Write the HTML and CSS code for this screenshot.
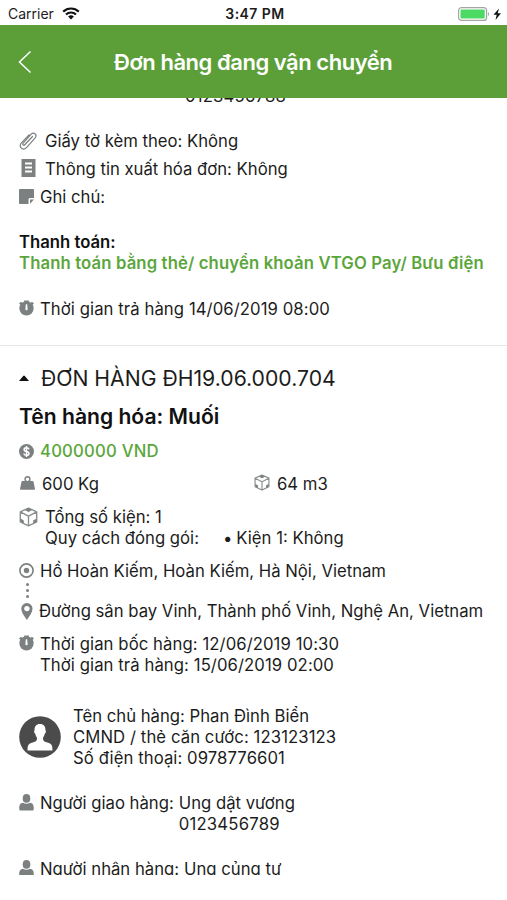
FILE: index.html
```html
<!DOCTYPE html>
<html lang="vi">
<head>
    <meta charset="UTF-8">
    <meta name="viewport" content="width=device-width, initial-scale=1.0">
    <title>Đơn hàng đang vận chuyển</title>
    <link rel="stylesheet" href="styles.css">
</head>
<body>
    <!-- icons used more than once -->
    <svg class="defs">
        <symbol id="timer" viewBox="0 0 16 16">
            <path d="M5.500 0h5v1.600h-5z"/>
            <path d="M0 3.200L2.200 1.200 4 2.800 2 5zM16 3.200l-2.200-2L12 2.800 14 5z"/>
            <circle cx="8" cy="8.400" r="7.600"/>
            <path d="M7.300 4h1.400l.5 5.200a1.200 1.200 0 0 1-2.400 0z" fill="#fff"/>
        </symbol>
        <symbol id="box" viewBox="0 0 18 19">
            <path d="M9 1l7.800 3.600v9.600L9 18l-7.800-3.800V4.600zM1.200 4.600L9 8.600l7.800-4M9 8.600V18" fill="none" stroke="#8a8e8e" stroke-width="1.300" stroke-linejoin="round"/>
            <path d="M9 1.200l3.500 1.700L9 4.700 5.500 2.900zM1.500 11l3 1.800v3L1.500 14zM16.500 11l-3 1.800v3l3-1.800z"/>
        </symbol>
        <symbol id="person" viewBox="0 0 15 17">
            <ellipse cx="7.500" cy="4.400" rx="3.800" ry="4.300"/>
            <path d="M.2 14.500c0-4 1.200-5.300 3.800-5.700 2 1.400 5 1.400 7 0 2.600.4 3.800 1.700 3.800 5.700 0 1.500-.5 2-1.500 2H1.700c-1 0-1.500-.5-1.500-2z"/>
        </symbol>
    </svg>

    <div class="status-bar">
        <div class="carrier">
            <span>Carrier</span>
            <svg width="18" height="13" viewBox="0 0 18 13">
                <path d="M1.200 4.600a11.300 11.300 0 0 1 15.600 0M4 7.500a7.200 7.200 0 0 1 10 0" fill="none" stroke="#111" stroke-width="2.200"/>
                <path d="M9 12.500L6.100 9.600a4.100 4.100 0 0 1 5.800 0z" fill="#111"/>
            </svg>
        </div>
        <div class="clock">3:47 PM</div>
        <div class="battery">
            <svg width="44" height="16" viewBox="0 0 44 16">
                <rect x=".6" y="1.600" width="28" height="12.800" rx="3" fill="#fff" stroke="#a5a5a5" stroke-width="1.200"/>
                <rect x="2.500" y="3.500" width="24.200" height="9" rx="1" fill="#4cd964"/>
                <path d="M30 6c1.500.5 1.500 3.500 0 4z" fill="#a5a5a5"/>
                <path d="M41 2.500L35.500 8.700h3.200L37.500 14 43 7.300h-3.300z" fill="#111"/>
            </svg>
        </div>
    </div>

    <div class="header">
        <svg class="back" width="14" height="24" viewBox="0 0 14 24">
            <path d="M12.500 1.500L1.500 12l11 10.500" fill="none" stroke="#fff" stroke-width="1.500"/>
        </svg>
        <h1>Đơn hàng đang vận chuyển</h1>
    </div>

    <div class="content">
        <div class="row prev-phone digits">0123456788</div>

        <div class="row attach">
            <svg class="icon wide" width="19" height="20" viewBox="0 0 19 20">
                <path d="M13.500 5.500L6 13.500c-1.200 1.400-3 .2-1.800-1.500L12 3.300c2.500-2.500 6.500 0 4.300 3.300L8 16.200c-3.500 4-9 .3-5.800-4L10 3.800" fill="none" stroke="#7c8080" stroke-width="1.200" stroke-linecap="round"/>
            </svg>
            <span>Giấy tờ kèm theo: Không</span>
        </div>
        <div class="row invoice">
            <svg class="icon wide" width="19" height="18" viewBox="0 0 19 18">
                <path d="M2.500 0h14v18H2.500z"/>
                <path d="M6 3.500h7v2H6zM6 7.500h7v2H6zM6 11.500h7v2H6z" fill="#fff"/>
            </svg>
            <span>Thông tin xuất hóa đơn: Không</span>
        </div>
        <div class="row note">
            <svg class="icon" width="15" height="15" viewBox="0 0 15 15">
                <path d="M1 0h13q1 0 1 1v8H11q-1.500 0-1.500 1.500V15H1q-1 0-1-1V1q0-1 1-1z"/>
                <path d="M11 10.500h4L11 14.800z"/>
            </svg>
            <span>Ghi chú:</span>
        </div>

        <div class="payment">
            <div class="row pay-label"><span>Thanh toán:</span></div>
            <div class="row pay-method"><span>Thanh toán bằng thẻ/ chuyển khoản VTGO Pay/ Bưu điện</span></div>
        </div>

        <div class="row return-time">
            <svg class="icon" width="15" height="16"><use href="#timer"/></svg>
            <span class="date">Thời gian trả hàng 14/06/2019 08:00</span>
        </div>

        <div class="order">
            <div class="order-title">
                <svg width="10" height="6" viewBox="0 0 10 6"><path d="M0 6l4.200-5q.8-.8 1.600 0L10 6z" fill="#111"/></svg>
                <span>ĐƠN HÀNG ĐH19.06.000.704</span>
            </div>
            <h2>Tên hàng hóa: Muối</h2>

            <div class="row price">
                <svg class="icon" width="15" height="15" viewBox="0 0 15 15">
                    <circle cx="7.500" cy="7.500" r="7.500"/>
                    <path d="M10 5.300C9.700 4.200 8.800 3.700 7.500 3.700 4.300 3.700 4.300 7 7.500 7.400c3.300.4 3.300 3.900 0 3.900-1.400 0-2.400-.6-2.600-1.800M7.500 2v11" fill="none" stroke="#fff" stroke-width="1.500"/>
                </svg>
                <span>4000000 VND</span>
            </div>

            <div class="row size">
                <div class="weight">
                    <svg class="icon" width="15" height="14" viewBox="0 0 15 14">
                        <path d="M2.500 5h10q.8 0 1 .8L15 13q.1.800-.7.800H.7q-.8 0-.7-.8l1.500-7.200q.2-.8 1-.8z"/>
                        <circle cx="7.500" cy="3.200" r="2.400" fill="none" stroke="#7c8080" stroke-width="1.400"/>
                    </svg>
                    <span>600 Kg</span>
                </div>
                <div class="volume">
                    <svg class="icon" width="16" height="17"><use href="#box"/></svg>
                    <span>64 m3</span>
                </div>
            </div>

            <div class="row packages">
                <svg class="icon wide" width="19" height="20"><use href="#box"/></svg>
                <div>
                    <div><span>Tổng số kiện: 1</span></div>
                    <div class="packing">
                        <span>Quy cách đóng gói:</span>
                        <span class="pack-item">Kiện 1: Không</span>
                    </div>
                </div>
            </div>

            <div class="row from">
                <svg class="icon" width="15" height="15" viewBox="0 0 15 15">
                    <circle cx="7.500" cy="7.500" r="6.600" fill="none" stroke="#7c8080" stroke-width="1.600"/>
                    <circle cx="7.500" cy="7.500" r="2.700"/>
                </svg>
                <span>Hồ Hoàn Kiếm, Hoàn Kiếm, Hà Nội, Vietnam</span>
            </div>
            <div class="dots"><i></i><i></i><i></i></div>
            <div class="row to">
                <svg class="icon" width="15" height="17" viewBox="0 0 15 17">
                    <path d="M7.900 0a5.600 5.600 0 0 1 5.600 5.700C13.500 9 11 12.500 7.900 17 4.800 12.500 2.300 9 2.300 5.700A5.600 5.600 0 0 1 7.900 0z"/>
                    <circle cx="7.900" cy="5.600" r="2.700" fill="#fff"/>
                </svg>
                <span>Đường sân bay Vinh, Thành phố Vinh, Nghệ An, Vietnam</span>
            </div>

            <div class="row times">
                <svg class="icon" width="15" height="16"><use href="#timer"/></svg>
                <div>
                    <div><span class="date">Thời gian bốc hàng: 12/06/2019 10:30</span></div>
                    <div><span class="date">Thời gian trả hàng: 15/06/2019 02:00</span></div>
                </div>
            </div>

            <div class="row owner">
                <svg width="42" height="42" viewBox="0 0 42 42">
                    <circle cx="21" cy="21" r="20.800" fill="#4b4b4b"/>
                    <path d="M21 8c3.800 0 5.600 2.500 5.400 6.200.9.300.5 2.800-.6 3.600-.5 2-1.300 3-1.800 4.200 0 3 1 3.500 4.500 4.500 4 1.200 5 2.500 5 8H8.500c0-5.500 1-6.800 5-8 3.500-1 4.500-1.500 4.500-4.500-.5-1.200-1.300-2.200-1.800-4.200-1.100-.8-1.500-3.300-.6-3.600C15.400 10.500 17.200 8 21 8z" fill="#fff"/>
                </svg>
                <div>
                    <div><span>Tên chủ hàng: Phan Đình Biển</span></div>
                    <div><span class="date">CMND / thẻ căn cước: 123123123</span></div>
                    <div><span class="date">Số điện thoại: 0978776601</span></div>
                </div>
            </div>

            <div class="row sender">
                <svg class="icon" width="15" height="17"><use href="#person"/></svg>
                <span class="label">Người giao hàng:</span>
                <div>
                    <div><span>Ung dật vương</span></div>
                    <div><span class="digits">0123456789</span></div>
                </div>
            </div>
            <div class="row receiver">
                <svg class="icon" width="15" height="17"><use href="#person"/></svg>
                <span class="label">Người nhận hàng:</span>
                <span>Ung củng tư</span>
            </div>
        </div>
    </div>
</body>
</html>
```
FILE: styles.css
```css
* {
    box-sizing: border-box;
}
body {
    margin: 0;
    height: 900px;
    overflow: hidden;
    background: #fff;
    color: #1c1c1c;
    font-family: Inter, "Liberation Sans", sans-serif;
    font-size: 16.7px;
    line-height: 21px;
}
svg {
    display: block;
    flex: none;
    fill: #7c8080;
}
span {
    white-space: nowrap;
}
.defs {
    display: none;
}
.digits {
    letter-spacing: 0.2px;
}
.date {
    letter-spacing: 0.08px;
}

/* status bar */
.status-bar {
    display: grid;
    grid-template-columns: 1fr auto 1fr;
    align-items: center;
    height: 25px;
    padding: 2px 5px 0 8px;
    font-size: 14px;
}
.carrier {
    display: flex;
    align-items: center;
    gap: 8px;
}
.clock {
    font-weight: 600;
    letter-spacing: 0.45px;
}
.battery {
    display: flex;
    justify-content: flex-end;
}

/* header */
.header {
    display: flex;
    align-items: center;
    height: 73px;
    padding-left: 18px;
    background: #5c9f38;
    color: #fff;
}
h1 {
    margin: 0 0 0 82px;
    font-size: 22px;
    font-weight: 600;
    line-height: 28px;
    letter-spacing: -0.46px;
    white-space: nowrap;
}

/* content */
.content {
    height: 777px;
    overflow: hidden;
}
.row {
    display: flex;
    padding-left: 19px;
}
.icon {
    margin: 2px 6px 0 0;
}
.icon.wide {
    margin: 0 7px 0 0;
}
.prev-phone {
    margin-top: -12px;
    padding-left: 185px;
}
.attach {
    margin-top: 24px;
}
.invoice, .note {
    margin-top: 7px;
}
.payment {
    margin-top: 24px;
    font-weight: 600;
}
.pay-label {
    padding-left: 19px;
    color: #111;
}
.pay-method {
    padding-left: 19px;
    color: #5ba63c;
    letter-spacing: 0.13px;
}
.return-time {
    margin-top: 25px;
}
.return-time .icon, .times .icon {
    margin-top: 1px;
}

/* order */
.order {
    margin-top: 25px;
    border-top: 1px solid #e6e6e6;
}
.order-title {
    display: flex;
    align-items: center;
    gap: 12px;
    margin-top: 21px;
    padding-left: 19px;
    font-size: 21.2px;
    line-height: 22px;
}
h2 {
    margin: 17px 0 0 19px;
    color: #111;
    font-size: 21.1px;
    font-weight: 600;
    line-height: 22px;
}
.price {
    margin-top: 13px;
    color: #5ba63c;
    font-weight: 500;
    letter-spacing: 0.2px;
}
.price .icon {
    margin-top: 3px;
}
.size, .packages, .from, .times {
    margin-top: 12px;
}
.weight {
    display: flex;
    width: 235px;
    padding-left: 1px;
}
.weight .icon {
    margin-right: 7px;
}
.volume {
    display: flex;
}
.volume .icon {
    margin: 0 7px 0 0;
}
.packing {
    display: flex;
}
.pack-item {
    margin-left: 24px;
}
.pack-item::before {
    content: "•";
    margin-right: 4px;
}
.dots {
    display: flex;
    flex-direction: column;
    gap: 3px;
    height: 19px;
    padding: 1px 0 0 26px;
}
.dots i {
    width: 3px;
    height: 3px;
    border-radius: 50%;
    background: #7c8080;
}
.to .icon {
    margin-right: 5px;
}
.owner {
    gap: 12px;
    margin-top: 30px;
}
.owner svg {
    margin-top: 10px;
}
.sender, .receiver {
    margin-top: 24px;
}
.sender .icon, .receiver .icon {
    margin-top: 1px;
}
.label {
    margin-right: 5px;
}
```
